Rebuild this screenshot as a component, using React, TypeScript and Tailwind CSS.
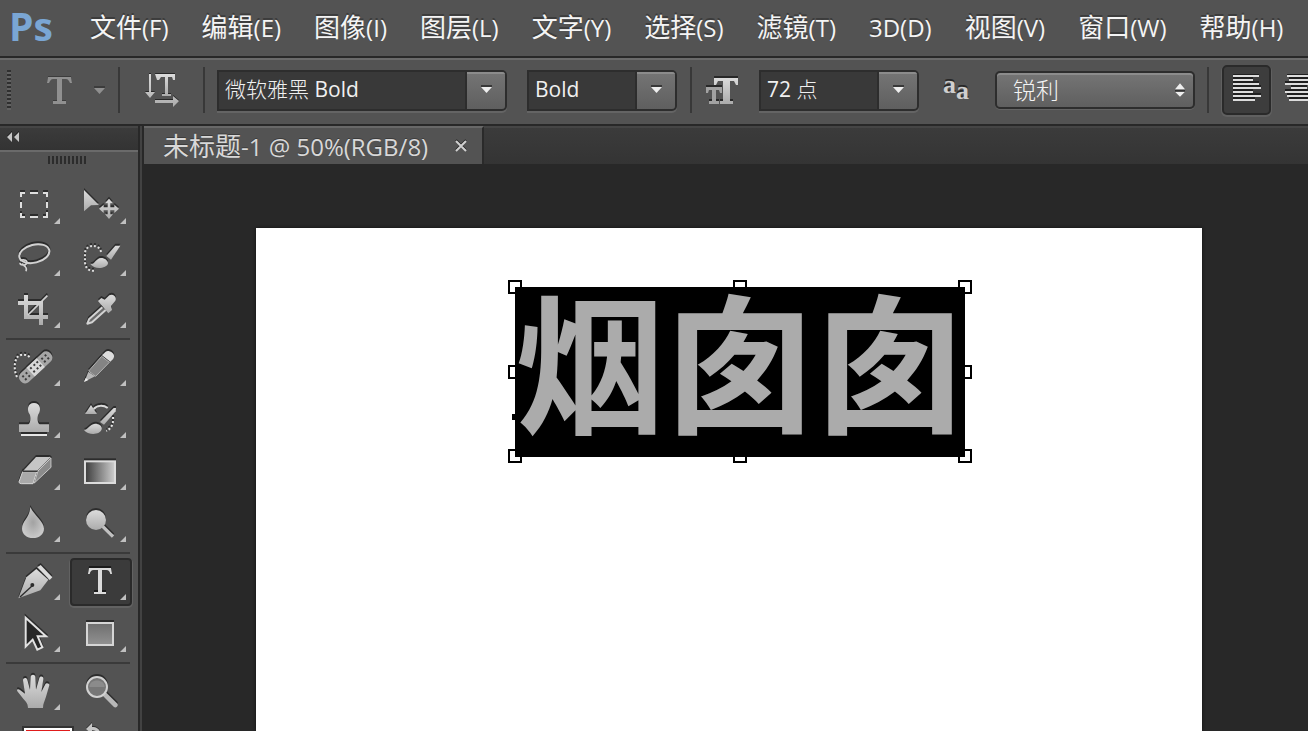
import type { ReactNode } from 'react';

const menus = [
  { name: '文件', hotkey: '(F)' },
  { name: '编辑', hotkey: '(E)' },
  { name: '图像', hotkey: '(I)' },
  { name: '图层', hotkey: '(L)' },
  { name: '文字', hotkey: '(Y)' },
  { name: '选择', hotkey: '(S)' },
  { name: '滤镜', hotkey: '(T)' },
  { name: '', hotkey: '3D(D)' },
  { name: '视图', hotkey: '(V)' },
  { name: '窗口', hotkey: '(W)' },
  { name: '帮助', hotkey: '(H)' },
];

const LIGHT = 'url(#metal)';

// Tool drawings use three units per pixel, so a 62x48 cell is 186x144.
type Tool = { label: string; origin: string; art: ReactNode; selected?: boolean; noMenu?: boolean };

const groups: Tool[][] = [
  [
    {
      label: '矩形选框工具',
      origin: '12 186',
      art: (
        <path
          d="M63 231v-12h12M90 219h24M129 219h12v12M141 246v18M141 276v15h-12M114 291h-24M75 291h-12v-12M63 264v-18"
          fill="none"
          stroke="#dedede"
          strokeWidth="6"
        />
      ),
    },
    {
      label: '移动工具',
      origin: '210 186',
      art: (
        <>
          <path d="M252 210l45 45-24 1-21 18z" fill={LIGHT} />
          <path
            d="M327 236l12 14h-8v12h12v-8l14 12-14 13v-8h-12v12h8l-12 14-12-14h8v-12h-12v8l-14-13 14-12v8h12v-12h-8z"
            fill={LIGHT}
          />
        </>
      ),
    },
    {
      label: '套索工具',
      origin: '12 342',
      art: (
        <g fill="none" stroke="#d2d2d2" strokeWidth="6">
          <ellipse cx="103" cy="401" rx="46" ry="27" transform="rotate(-14 103 401)" />
          <path d="M60 422c12-6 24 0 20 8s-20 6-20-2M68 430c-2 10 16 4 10 24" strokeWidth="5" />
        </g>
      ),
    },
    {
      label: '快速选择工具',
      origin: '210 342',
      art: (
        <>
          <path
            d="M303 396c-4-24-44-26-48 2v30c2 22 18 26 32 24"
            fill="none"
            stroke="#dedede"
            strokeWidth="6"
            strokeDasharray="6 6"
          />
          <path d="M346 377h15l-28 42-14-11z" fill={LIGHT} />
          <path d="M271 433c14 0 16-18 32-19 12 0 20 8 21 15 0 10-16 15-26 15-12 0-20-4-27-11z" fill={LIGHT} />
        </>
      ),
    },
    {
      label: '裁剪工具',
      origin: '12 498',
      art: (
        <>
          <path d="M78 525v66h66M54 549h69v66" fill="none" stroke={LIGHT} strokeWidth="12" />
          <path d="M84 585l58-58" stroke="#d2d2d2" strokeWidth="5" />
        </>
      ),
    },
    {
      label: '吸管工具',
      origin: '210 498',
      art: (
        <>
          <path d="M307 562l-40 36-5 13 14-4 41-37" fill="#6a6a6a" stroke="#d2d2d2" strokeWidth="6" strokeLinejoin="round" />
          <path d="M294 543l10-9 10 5 14-13c10-6 24 4 18 16l-13 16 3 12-11 10z" fill={LIGHT} />
        </>
      ),
    },
  ],
  [
    {
      label: '污点修复画笔工具',
      origin: '12 27',
      art: (
        <>
          <path d="M51 126c-10-20-8-46 0-58 8-12 28-12 39-1" fill="none" stroke="#e6e6e6" strokeWidth="6" strokeDasharray="6 6" />
          <g transform="rotate(-43 107 97)">
            <rect x="46" y="79" width="122" height="36" rx="16" fill="#a6a6a6" />
            <rect x="86" y="79" width="42" height="36" fill="#d8d8d8" />
            <path
              d="M58 91h6M72 91h6M58 103h6M72 103h6M92 89h6M106 89h6M118 89h6M92 103h6M106 103h6M118 103h6M136 91h6M150 91h6M136 103h6M150 103h6"
              stroke="#3c3c3c"
              strokeWidth="6"
            />
          </g>
        </>
      ),
    },
    {
      label: '铅笔工具',
      origin: '210 27',
      art: (
        <>
          <path d="M306 61l11-11c8-6 27 3 25 15-1 6-6 10-11 15z" fill="#dcdcdc" />
          <path d="M305 64l23 18-41 42-21-16z" fill="#848484" stroke="#b4b4b4" strokeWidth="3" />
          <path d="M265 110l20 14-32 16z" fill="#b8b8b8" />
          <path d="M257 129l8 6-13 6z" fill="#eee" />
        </>
      ),
    },
    {
      label: '仿制图章工具',
      origin: '12 183',
      art: (
        <>
          <path d="M102 204c20 0 22 22 13 34-4 8-3 30 5 30h27v23H57v-23h27c8 0 9-22 5-30-9-12-7-34 13-34z" fill={LIGHT} />
          <path d="M63 300h78" stroke="#e6e6e6" strokeWidth="6" />
        </>
      ),
    },
    {
      label: '历史记录画笔工具',
      origin: '210 183',
      art: (
        <>
          <path d="M273 210l18 27h-36z" fill={LIGHT} />
          <path d="M281 222c10-12 30-12 42-3" fill="none" stroke="#dcdcdc" strokeWidth="6" />
          <path d="M341 219h7l-1 10-35 40-12-8z" fill={LIGHT} />
          <path d="M252 285c13-1 16-17 33-19 14 0 22 8 20 17-4 18-42 18-53 2z" fill={LIGHT} />
          <path d="M339 246c2 20-4 34-20 42" fill="none" stroke="#e6e6e6" strokeWidth="6" strokeDasharray="6 6" />
        </>
      ),
    },
    {
      label: '橡皮擦工具',
      origin: '12 339',
      art: (
        <>
          <path d="M108 366h45l-41 41H70z" fill="#c6c6c6" />
          <path d="M68 410h42l-11 36H64c-7-1-8-4-6-8z" fill="#a9a9a9" stroke="#d6d6d6" strokeWidth="3" />
          <path d="M153 369l-39 39-11 36 50-47z" fill="#8b8b8b" stroke="#c6c6c6" strokeWidth="3" />
          <path d="M68 409h44" stroke="#3a3a3a" strokeWidth="4" />
        </>
      ),
    },
    {
      label: '渐变工具',
      origin: '210 339',
      art: <rect x="255" y="379" width="90" height="65" fill="url(#ramp)" stroke="#dcdcdc" strokeWidth="6" />,
    },
    {
      label: '模糊工具',
      origin: '12 495',
      art: <path d="M91 516c10 24 41 42 41 65 0 17-15 28-33 28s-33-11-33-28c0-24 22-30 25-65z" fill="url(#drop)" />,
    },
    {
      label: '减淡工具',
      origin: '210 495',
      art: (
        <>
          <path d="M308 574l31 31" stroke="#c0c0c0" strokeWidth="10" />
          <circle cx="288" cy="555" r="30" fill={LIGHT} />
        </>
      ),
    },
  ],
  [
    {
      label: '钢笔工具',
      origin: '12 39',
      art: (
        <>
          <path d="M112 67l10-7 35 37-8 8z" fill="#dcdcdc" />
          <path d="M109 72l36 32-24 32-66 24 24-63z" fill={LIGHT} />
          <path d="M60 156l36-33" stroke="#2c2c2c" strokeWidth="4" />
          <circle cx="97" cy="120" r="6" fill="#2c2c2c" />
        </>
      ),
    },
    {
      label: '横排文字工具',
      origin: '210 39',
      selected: true,
      art: <path d="M267 69h66l3 18h-5c-2-8-5-12-12-12h-13v66h12v6h-36v-6h12V75h-13c-7 0-10 4-12 12h-5z" fill="#dcdcdc" />,
    },
    {
      label: '路径选择工具',
      origin: '12 195',
      art: <path d="M77 218l61 56h-25l14 33-15 7-14-30-21 21z" fill="#262626" stroke="#e2e2e2" strokeWidth="6" />,
    },
    {
      label: '矩形工具',
      origin: '210 195',
      art: <rect x="261" y="234" width="78" height="66" fill="url(#shade)" stroke="#d6d6d6" strokeWidth="6" />,
    },
  ],
  [
    {
      label: '抓手工具',
      origin: '12 369',
      art: (
        <path
          d="M84 489c0-16-10-22-16-30l-16-20c-3-6 3-8 8-4l15 11-6-40c0-8 10-9 13-2l8 30 2-39c1-8 13-8 14 0l2 39 10-35c3-7 13-5 12 3l-6 39 12-23c3-6 13-3 12 3l-10 34c-4 14-9 20-9 34z"
          fill={LIGHT}
        />
      ),
    },
    {
      label: '缩放工具',
      origin: '210 369',
      noMenu: true,
      art: (
        <>
          <path d="M314 448l32 32" stroke="#b8b8b8" strokeWidth="14" strokeLinecap="round" />
          <circle cx="291" cy="426" r="30" fill="#777" stroke="#d2d2d2" strokeWidth="6" />
          <path d="M268 426c0-26 46-26 46 0z" fill="#8b8b8b" />
        </>
      ),
    },
  ],
];

const handles = [
  '-left-[7px] -top-[7px]',
  'left-1/2 -ml-[7px] -top-[7px]',
  '-right-[7px] -top-[7px]',
  '-left-[7px] top-1/2 -mt-[7px]',
  '-right-[7px] top-1/2 -mt-[7px]',
  '-left-[7px] -bottom-[6px]',
  'left-1/2 -ml-[7px] -bottom-[6px]',
  '-right-[7px] -bottom-[6px]',
];

function Gradients() {
  return (
    <svg className="absolute h-0 w-0" aria-hidden="true">
      <defs>
        <linearGradient id="metal" x1="0" y1="0" x2="0" y2="1">
          <stop offset="0" stopColor="#dcdcdc" />
          <stop offset="1" stopColor="#ababab" />
        </linearGradient>
        <linearGradient id="ramp">
          <stop offset="0" stopColor="#3c3c3c" />
          <stop offset="1" stopColor="#cfcfcf" />
        </linearGradient>
        <linearGradient id="shade" x1="0" y1="0" x2="0" y2="1">
          <stop offset="0" stopColor="#6e6e6e" />
          <stop offset="1" stopColor="#929292" />
        </linearGradient>
        <radialGradient id="drop">
          <stop offset="0" stopColor="#a2a2a2" />
          <stop offset="1" stopColor="#c9c9c9" />
        </radialGradient>
      </defs>
    </svg>
  );
}

function ToolButton({ tool }: { tool: Tool }) {
  return (
    <button
      aria-label={tool.label}
      className={
        tool.selected
          ? 'relative h-12 w-[62px] rounded-[4px] border-2 border-[#2a2a2a] bg-[#3b3b3b] shadow-[0_1px_0_1px_#626262]'
          : 'relative h-12 w-[62px]'
      }
    >
      <svg
        viewBox={tool.origin + ' 186 144'}
        className={
          tool.selected
            ? '-m-[2px] h-12 w-[62px] max-w-none drop-shadow-[0_-2px_0_#1c1c1c]'
            : 'h-12 w-[62px] drop-shadow-[0_-2px_0_#2c2c2c]'
        }
      >
        {tool.art}
      </svg>
      {!tool.noMenu && (
        <svg
          viewBox="0 0 6 6"
          className={tool.selected ? 'absolute right-1 bottom-1 h-[6px] w-[6px]' : 'absolute right-[6px] bottom-[6px] h-[6px] w-[6px]'}
        >
          <path d="M6 0v6H0z" fill="#c0c0c0" />
        </svg>
      )}
    </button>
  );
}

function Divider({ className }: { className: string }) {
  return <div className={`h-[46px] w-[2px] shrink-0 bg-[#383838] ${className}`} />;
}

function ComboField({ label, value, className }: { label: string; value: string; className: string }) {
  return (
    <div
      className={`flex h-[41px] shrink-0 overflow-hidden rounded-r-[5px] border-2 border-[#2d2d2d] bg-[#393939] shadow-[0_2px_0_#646464] ${className}`}
    >
      <input
        aria-label={label}
        defaultValue={value}
        className="min-w-0 flex-1 pl-[6px] font-['Open_Sans','Noto_Sans_CJK_SC_Light','Noto_Sans_CJK_SC',sans-serif] text-[21px] text-[#f0f0f0] outline-none"
      />
      <button
        aria-label={`${label}列表`}
        className="flex w-10 shrink-0 items-center justify-center border-l-2 border-[#2d2d2d] bg-linear-to-b from-[#757575] to-[#5f5f5f] shadow-[inset_0_2px_0_#8c8c8c]"
      >
        <svg viewBox="0 0 11 8" className="-mt-[2px] h-2 w-[11px]">
          <path d="M0 0h11v2H0z" fill="#383838" />
          <path d="M0 2h11L5.500 8z" fill="#eee" />
        </svg>
      </button>
    </div>
  );
}

function AlignLines({ centered }: { centered?: boolean }) {
  const d = centered
    ? 'M2 2h24M4 6h20M0 10h28M6 14h16M0 18h28M2 22h24M4 26h20'
    : 'M0 2h26M0 6h20M0 10h26M0 14h28M0 18h20M0 22h28M0 26h22';
  return (
    <svg viewBox="0 0 28 28" className="h-7 w-7 shrink-0">
      <path d={d} stroke="#1f1f1f" strokeWidth="2" transform="translate(0 -2)" />
      <path d={d} stroke="#dcdcdc" strokeWidth="2" />
    </svg>
  );
}

function MenuBar() {
  return (
    <nav className="flex h-14 shrink-0 items-center gap-px pl-[9px]">
      <div className="mb-1 w-16 shrink-0 text-[39px] leading-[52px] font-bold text-[#7aa6d4]">Ps</div>
      {menus.map((menu) => (
        <button
          key={menu.hotkey}
          className="mb-[2px] shrink-0 px-4 text-[26px] leading-[40px] whitespace-nowrap text-[#f4f4f4] [text-shadow:0_-2px_0_#3c3c3c]"
        >
          {menu.name}
          <span className="text-[24px]">{menu.hotkey}</span>
        </button>
      ))}
    </nav>
  );
}

function OptionsBar() {
  return (
    <div className="flex h-[68px] shrink-0 items-center overflow-hidden border-y-2 border-t-[#6a6a6a] border-b-[#282828] pb-1 pl-[7px]">
      <div className="h-10 w-1 shrink-0 bg-[repeating-linear-gradient(#303030_0_2px,#626262_2px_4px)]" />
      <button aria-label="工具预设" className="ml-9 flex w-[58px] shrink-0 items-center justify-between">
        <svg viewBox="0 0 25 28" className="h-7 w-[25px] drop-shadow-[0_-1px_0_#3c3c3c]">
          <path d="M1 1h23l1 6h-2c-1-2-2-4-4-4h-4v22h4v3H6v-3h4V3H6C4 3 3 5 2 7H0z" fill="#909090" />
        </svg>
        <svg viewBox="0 0 11 8" className="h-2 w-[11px]">
          <path d="M0 0h11v2H0z" fill="#3c3c3c" />
          <path d="M0 2h11L5.500 8z" fill="#8f8f8f" />
        </svg>
      </button>
      <Divider className="ml-[13px]" />
      <button aria-label="切换文本取向" className="ml-[25px] shrink-0">
        <svg viewBox="0 0 34 34" className="h-[34px] w-[34px] drop-shadow-[0_-1px_0_#282828]">
          <path d="M10 1h20v6h-2l-1-3h-4v17h3v2h-9v-2h3V4h-4l-2 3h-2z" fill={LIGHT} />
          <path d="M4 1h2v18h4l-5 6-5-6h4zM10 27h18v-4l6 5-6 6v-4H10z" fill={LIGHT} />
        </svg>
      </button>
      <Divider className="ml-6" />
      <ComboField label="字体" value="微软雅黑 Bold" className="ml-3 w-[290px]" />
      <ComboField label="字形" value="Bold" className="ml-5 w-[150px]" />
      <Divider className="ml-[13px]" />
      <svg viewBox="0 0 32 28" className="ml-[14px] h-7 w-8 shrink-0 drop-shadow-[0_-2px_0_#282828]">
        <path d="M0 11h16v6h-2l-1-3h-3v11h3v3H3v-3h3V14H3l-1 3H0z" fill="#a2a2a2" />
        <path d="M8 2h24v7h-2l-2-4h-4v20h3v3H14v-3h3V5h-5l-2 4H8z" fill={LIGHT} />
      </svg>
      <ComboField label="字号" value="72 点" className="ml-[21px] w-[160px]" />
      <div className="ml-6 flex w-7 shrink-0 items-start font-['Liberation_Serif',serif] text-[26px] leading-[26px] font-bold text-[#cfcfcf] [text-shadow:0_-2px_0_#282828]">
        <span className="-mt-1">a</span>
        <span className="mt-[2px]">a</span>
      </div>
      <div className="relative ml-6 h-[38px] w-[200px] shrink-0">
        <select
          aria-label="消除锯齿"
          className="h-full w-full appearance-none rounded-[5px] border-2 border-[#2d2d2d] bg-linear-to-b from-[#757575] to-[#5f5f5f] pl-4 text-[23px] font-light text-[#f4f4f4] shadow-[inset_0_2px_0_#8c8c8c,0_1px_0_#646464]"
        >
          <option>锐利</option>
        </select>
        <svg viewBox="0 0 12 16" className="pointer-events-none absolute top-[11px] right-[10px] h-4 w-[10px]">
          <path d="M6 0l6 7H0zM0 10h12l-6 6z" fill="#eee" />
          <path d="M0 8h12v2H0z" fill="#333" />
        </svg>
      </div>
      <Divider className="ml-3" />
      <button
        aria-label="左对齐文本"
        className="ml-[13px] flex h-[50px] w-[49px] shrink-0 items-center justify-center rounded-[5px] border-2 border-[#2a2a2a] bg-[#3d3d3d] pb-1 shadow-[0_1px_0_1px_#606060]"
      >
        <AlignLines />
      </button>
      <button aria-label="居中对齐文本" className="ml-[14px] shrink-0 pb-1">
        <AlignLines centered />
      </button>
    </div>
  );
}

function Toolbox() {
  return (
    <aside className="flex w-[138px] shrink-0 flex-col overflow-hidden">
      <div className="flex h-6 shrink-0 items-center border-t-2 border-[#454545] bg-linear-to-b from-[#3b3b3b] to-[#333] pl-[7px]">
        <button aria-label="折叠面板">
          <svg viewBox="0 0 12 10" className="-mt-1 h-[10px] w-3 drop-shadow-[0_-1px_0_#111]">
            <path d="M5 0v10L0 5zM12 0v10L7 5z" fill="#c6c6c6" />
          </svg>
        </button>
      </div>
      <div className="h-[2px] shrink-0 bg-[#6a6a6a]" />
      <div className="mt-1 ml-12 h-2 w-[38px] shrink-0 bg-[repeating-linear-gradient(90deg,#2c2c2c_0_2px,#535353_2px_4px)]" />
      <div className="mt-[18px] flex flex-col gap-1 pl-1">
        {groups.map((tools, index) => (
          <div key={tools[0].label} className="flex flex-col gap-1">
            {index > 0 && <div className="ml-[2px] h-[2px] w-[124px] bg-[#3a3a3a]" />}
            <div className="grid w-32 grid-cols-2 gap-1">
              {tools.map((tool) => (
                <ToolButton key={tool.label} tool={tool} />
              ))}
            </div>
          </div>
        ))}
      </div>
      <div className="mt-[10px] ml-[22px] flex items-start gap-3">
        <button aria-label="前景色" className="h-[50px] w-[52px] shrink-0 border-2 border-[#333] bg-white p-[2px]">
          <div className="h-full bg-[#e01b1b]" />
        </button>
        <button aria-label="切换前景色和背景色" className="-mt-1 shrink-0">
          <svg viewBox="0 0 16 16" className="h-4 w-4 drop-shadow-[0_-1px_0_#2c2c2c]">
            <path d="M0 7l6-6v4c6 0 9 3 9 11h-3c0-6-2-8-6-8v4z" fill="#c6c6c6" />
          </svg>
        </button>
      </div>
    </aside>
  );
}

function Workspace() {
  return (
    <main className="flex min-w-0 flex-1 flex-col">
      <div className="flex h-[38px] shrink-0 border-t-2 border-[#454545] bg-linear-to-b from-[#3b3b3b] to-[#343434]">
        <div className="-mt-[2px] flex h-[38px] items-center border-t-2 border-r-2 border-t-[#686868] border-r-[#2a2a2a] bg-[#535353] pr-[15px] pl-[19px]">
          <span className="text-[26px] leading-[36px] whitespace-nowrap text-[#d8d8d8] [text-shadow:0_-1px_0_#3c3c3c]">
            未标题<span className="text-[24px]">-1 @ 50%(RGB/8)</span>
          </span>
          <button aria-label="关闭" className="ml-[27px]">
            <svg viewBox="0 0 12 12" className="h-3 w-3 drop-shadow-[0_-1px_0_#222]">
              <path d="M1 1l10 10M11 1L1 11" stroke="#d0d0d0" strokeWidth="2" />
            </svg>
          </button>
        </div>
      </div>
      <div className="flex min-h-0 flex-1 bg-[#282828] pt-16 pr-[106px] pl-28">
        <div className="relative flex-1 bg-white shadow-[0_0_3px_#111]">
          {/* selected type layer with its transform box */}
          <div className="absolute top-[59px] left-[259px] h-[170px] bg-black">
            <div className="text-[150px] leading-[154px] font-bold whitespace-nowrap text-[#ababab]">烟囱囱</div>
            {handles.map((position) => (
              <span key={position} className={`absolute h-[14px] w-[14px] border-2 border-black ${position}`} />
            ))}
            <span className="absolute top-[127px] -left-[3px] h-[6px] w-[6px] bg-black" />
          </div>
        </div>
      </div>
    </main>
  );
}

export default function App() {
  return (
    <div className="flex h-screen flex-col overflow-hidden bg-[#535353] font-['Open_Sans','Noto_Sans_CJK_SC',sans-serif]">
      <Gradients />
      <MenuBar />
      <div className="h-[2px] shrink-0 bg-[#282828]" />
      <OptionsBar />
      <div className="flex min-h-0 flex-1">
        <Toolbox />
        <div className="w-[6px] shrink-0 border-x-2 border-[#282828] bg-[#424242]" />
        <Workspace />
      </div>
    </div>
  );
}
